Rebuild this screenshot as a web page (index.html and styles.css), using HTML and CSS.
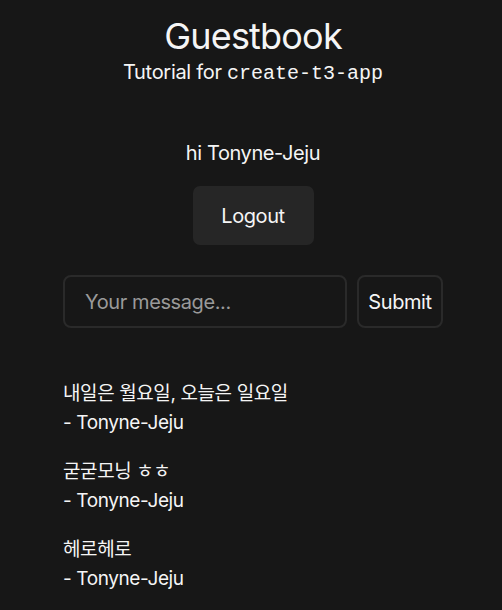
FILE: index.html
```html
<!DOCTYPE html>
<html lang="ko">
<head>
<meta charset="utf-8">
<title>Guestbook</title>
<link rel="stylesheet" href="styles.css">
</head>
<body>
<main class="page">
  <h1 class="title">Guestbook</h1>
  <p class="subtitle">Tutorial for <code class="mono">create-t3-app</code></p>
  <div class="session">
    <p class="greeting">hi Tonyne-Jeju</p>
    <button class="logout">Logout</button>
  </div>
  <form class="form">
    <input class="input" type="text" placeholder="Your message...">
    <button class="submit" type="button">Submit</button>
  </form>
  <ul class="messages">
    <li class="message"><p class="line">내일은 월요일, 오늘은 일요일</p><span class="line">- Tonyne-Jeju</span></li>
    <li class="message"><p class="line">굳굳모닝 ㅎㅎ</p><span class="line">- Tonyne-Jeju</span></li>
    <li class="message"><p class="line">헤로헤로</p><span class="line">- Tonyne-Jeju</span></li>
  </ul>
</main>
</body>
</html>
```
FILE: styles.css
```css
html, body {
  margin: 0;
  padding: 0;
  background: #171717;
  color: #f5f5f5;
  font-family: Inter, "Noto Sans CJK KR", sans-serif;
}
.page {
  display: flex;
  flex-direction: column;
  align-items: center;
  padding: 16px 0 0 4px;
  min-height: 610px;
  box-sizing: border-box;
}
.title {
  margin: 0;
  font-size: 36px;
  line-height: 40px;
  font-weight: 400;
  letter-spacing: -0.8px;
}
.subtitle {
  margin: 2px 0 0;
  font-size: 20px;
  line-height: 28px;
  letter-spacing: -0.3px;
}
.mono {
  font-family: "Liberation Mono", monospace;
  font-size: 20px;
  letter-spacing: 0;
}
.session {
  display: flex;
  flex-direction: column;
  align-items: center;
  margin-top: 51px;
  gap: 19px;
}
.greeting {
  margin: 0;
  font-size: 20px;
  line-height: 28px;
  letter-spacing: -0.4px;
}
.logout {
  width: 121px;
  height: 59px;
  border: none;
  border-radius: 7px;
  background: #262626;
  color: #f5f5f5;
  font-family: inherit;
  font-size: 20px;
  letter-spacing: -0.4px;
  padding: 0;
}
.form {
  display: flex;
  gap: 10px;
  margin-top: 30px;
  width: 380px;
}
.input {
  width: 284px;
  height: 53px;
  box-sizing: border-box;
  border: 2px solid #2a2a2a;
  border-radius: 8px;
  background: transparent;
  color: #f5f5f5;
  padding: 0 20px;
  font-family: inherit;
  font-size: 20px;
  letter-spacing: -0.4px;
  outline: none;
}
.input::placeholder {
  color: #9a9a9a;
}
.submit {
  width: 86px;
  height: 53px;
  box-sizing: border-box;
  border: 2px solid #2a2a2a;
  border-radius: 8px;
  background: transparent;
  color: #f5f5f5;
  font-family: inherit;
  font-size: 20px;
  letter-spacing: -0.4px;
  padding: 0;
}
.messages {
  list-style: none;
  margin: 52px 0 0;
  padding: 0;
  width: 380px;
  display: flex;
  flex-direction: column;
  gap: 21px;
}
.message {
  display: flex;
  flex-direction: column;
  gap: 1px;
}
.line {
  margin: 0;
  font-size: 19px;
  line-height: 28px;
  letter-spacing: -0.4px;
}
```
